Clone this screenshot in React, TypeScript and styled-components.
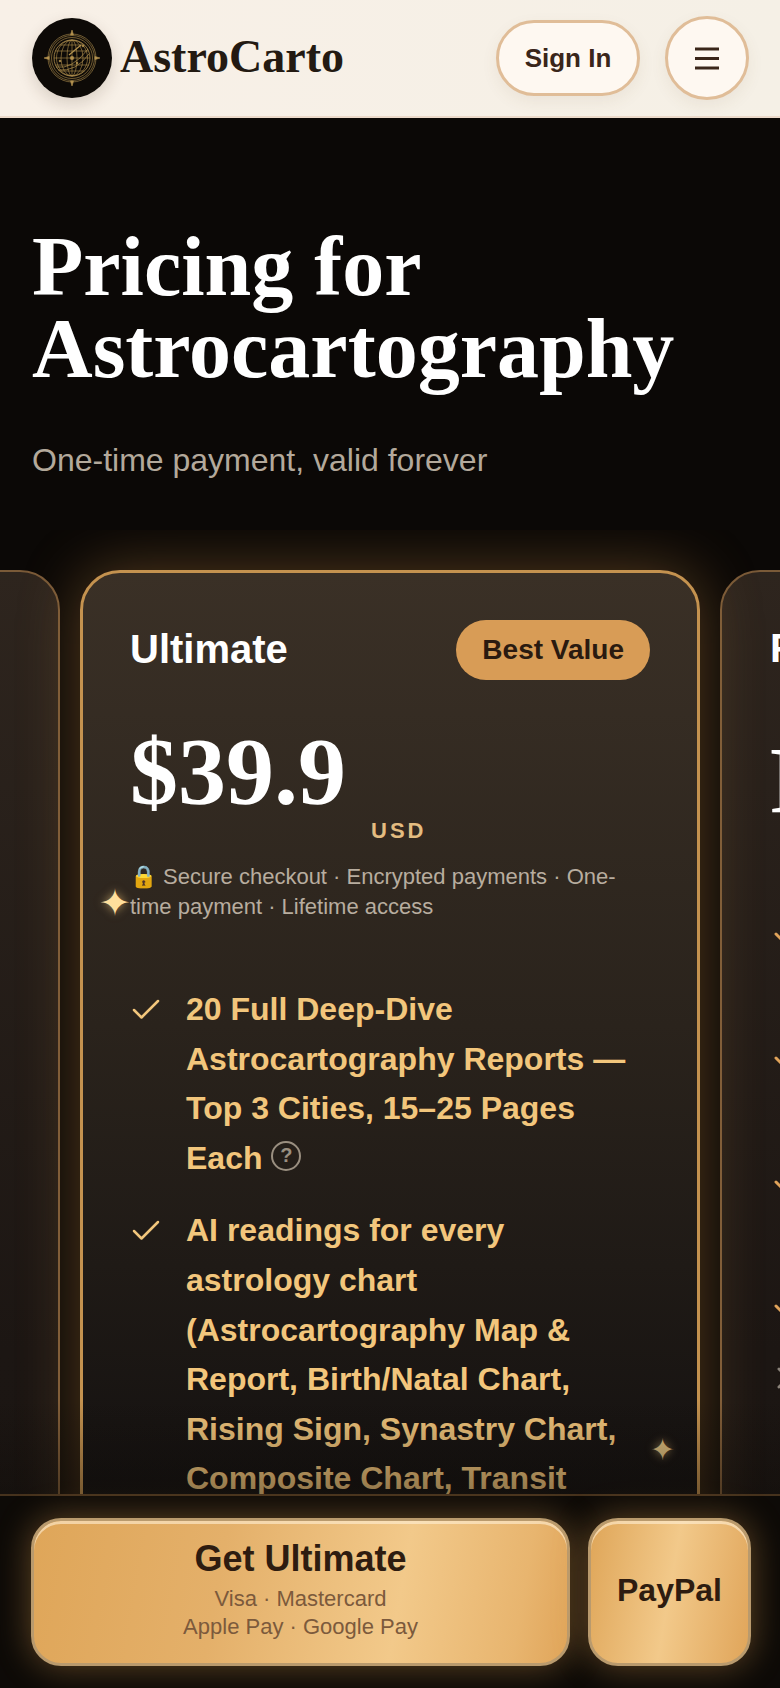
import styled, { createGlobalStyle } from "styled-components";
import { Check, X } from "lucide-react";

const GlobalStyle = createGlobalStyle`
  html, body {
    margin: 0;
    padding: 0;
    background: #0b0806;
  }
  * {
    box-sizing: border-box;
  }
`;

const SANS = `"Liberation Sans", Arial, sans-serif`;
const SERIF = `"Liberation Serif", "Times New Roman", serif`;

const GlobeLogo = () => (
  <svg width="58" height="58" viewBox="-29 -29 58 58" fill="none" stroke="#b3924f" strokeWidth="0.6">
    <circle r="24" />
    <circle r="22.500" />
    <circle r="20.500" />
    <circle r="18" strokeWidth="0.8" />
    <ellipse rx="5" ry="18" />
    <ellipse rx="11" ry="18" />
    <ellipse rx="15.500" ry="18" />
    <path d="M0-18V18M-18 0H18M-16.500-7H16.500M-16.500 7H16.500M-12.500-13H12.500M-12.500 13H12.500" />
    <path d="M-16 9Q0 12 16-9M-14 12Q4 14 17-4" strokeWidth="0.7" />
    <path d="M-3-3L9-13" strokeWidth="1.300" />
    <circle r="1.800" fill="#b3924f" />
    <circle cx="11" cy="-12" r="0.9" fill="#b3924f" />
    <circle cx="-12" cy="3" r="0.9" fill="#b3924f" />
    <circle cx="5" cy="5" r="0.9" fill="#b3924f" />
    <path d="M0-28L1.500-23H-1.500ZM0 28L1.500 23H-1.500ZM-28 0L-23-1.500V1.500ZM28 0L23-1.500V1.500Z" fill="#b3924f" />
  </svg>
);

export default function App() {
  return (
    <Page>
      <GlobalStyle />
      <Header>
        <Brand>
          <LogoBadge>
            <GlobeLogo />
          </LogoBadge>
          <BrandName>AstroCarto</BrandName>
        </Brand>
        <HeaderActions>
          <SignIn>Sign In</SignIn>
          <MenuButton aria-label="Menu">
            <svg width="26" height="24" viewBox="0 0 26 24" stroke="#3a261a" strokeWidth="3">
              <path d="M1 3H25M1 12.500H25M1 22H25" />
            </svg>
          </MenuButton>
        </HeaderActions>
      </Header>

      <Hero>
        <Title>
          Pricing for
          <br />
          Astrocartography
        </Title>
        <Subtitle>One-time payment, valid forever</Subtitle>
      </Hero>

      <Carousel>
        <SideCard />

        <MainCard>
          <Sparkle $left={16} $top={311} $size={38}>✦</Sparkle>
          <Sparkle $left={567} $top={862} $size={30} $dim>✦</Sparkle>
          <CardHead>
            <PlanName>Ultimate</PlanName>
            <Badge>Best Value</Badge>
          </CardHead>
          <PriceRow>
            <Price>$39.9</Price>
            <Currency>USD</Currency>
          </PriceRow>
          <Secure>🔒 Secure checkout · Encrypted payments · One-time payment · Lifetime access</Secure>
          <Features>
            <Feature>
              <CheckMark>
                <Check size={36} strokeWidth={1.7} />
              </CheckMark>
              <FeatureText>
                20 Full Deep-Dive Astrocartography Reports — Top 3 Cities, 15–25 Pages Each{" "}
                <Help>?</Help>
              </FeatureText>
            </Feature>
            <Feature>
              <CheckMark>
                <Check size={36} strokeWidth={1.7} />
              </CheckMark>
              <FeatureText>
                AI readings for every astrology chart (Astrocartography Map &amp; Report,
                Birth/Natal Chart, Rising Sign, Synastry Chart, Composite Chart, Transit
              </FeatureText>
            </Feature>
          </Features>
        </MainCard>

        <SideCard>
          <CardHead>
            <PlanName>Free</PlanName>
          </CardHead>
          <SidePrice>Free</SidePrice>
          <SideList>
            <SideRow><Check size={36} strokeWidth={2} color="#e0a35a" /></SideRow>
            <SideRow><Check size={36} strokeWidth={2} color="#e0a35a" /></SideRow>
            <SideRow><Check size={36} strokeWidth={2} color="#e0a35a" /></SideRow>
            <SideRow $short><Check size={36} strokeWidth={2} color="#e0a35a" /></SideRow>
            <SideRow><X size={36} strokeWidth={2} color="#8a8279" /></SideRow>
          </SideList>
        </SideCard>
      </Carousel>

      <BottomBar>
        <PrimaryButton>
          <ButtonTitle>Get Ultimate</ButtonTitle>
          <ButtonNote>
            Visa · Mastercard
            <br />
            Apple Pay · Google Pay
          </ButtonNote>
        </PrimaryButton>
        <PayPalButton>PayPal</PayPalButton>
      </BottomBar>
    </Page>
  );
}

const Page = styled.div`
  position: relative;
  height: 100vh;
  overflow: hidden;
  display: flex;
  flex-direction: column;
  background: #0b0806;
  font-family: ${SANS};
`;

const Header = styled.header`
  height: 118px;
  flex: none;
  display: flex;
  align-items: center;
  justify-content: space-between;
  padding: 0 31px 0 32px;
  background: linear-gradient(90deg, #f8f0e7, #f5f0e6);
  border-bottom: 2px solid #ecdaca;
`;

const Brand = styled.div`
  display: flex;
  align-items: center;
  gap: 8px;
`;

const LogoBadge = styled.div`
  width: 80px;
  height: 80px;
  border-radius: 50%;
  display: flex;
  align-items: center;
  justify-content: center;
  background: #0d0a07;
  box-shadow: 0 6px 16px rgba(60, 40, 20, 0.16);
`;

const BrandName = styled.div`
  margin-top: -4px;
  font-family: ${SERIF};
  font-weight: 700;
  font-size: 46px;
  color: #231a12;
`;

const HeaderActions = styled.div`
  display: flex;
  align-items: center;
  gap: 25px;
`;

const SignIn = styled.button`
  width: 144px;
  height: 76px;
  border: 3px solid #e0bd98;
  border-radius: 38px;
  background: #fef8f1;
  color: #3a261a;
  font-family: ${SANS};
  font-weight: 700;
  font-size: 26px;
  box-shadow: 0 6px 16px rgba(120, 90, 50, 0.08);
`;

const MenuButton = styled.button`
  width: 84px;
  height: 84px;
  border: 3px solid #e0bd98;
  border-radius: 50%;
  background: #fef8f1;
  display: flex;
  align-items: center;
  justify-content: center;
  padding: 0;
  box-shadow: 0 6px 16px rgba(120, 90, 50, 0.08);
`;

const Hero = styled.section`
  height: 412px;
  flex: none;
  padding: 108px 32px 0;
  background: #0b0806;
`;

const Title = styled.h1`
  margin: 0;
  font-family: ${SERIF};
  font-weight: 700;
  font-size: 84px;
  line-height: 82px;
  color: #fff;
`;

const Subtitle = styled.p`
  margin: 48px 0 0;
  font-size: 32px;
  line-height: 44px;
  color: #b3a99b;
`;

const Carousel = styled.section`
  flex: 1;
  min-height: 0;
  overflow: hidden;
  display: flex;
  justify-content: center;
  gap: 20px;
  padding-top: 40px;
  align-items: flex-start;
`;

const SideCard = styled.div`
  flex: none;
  width: 620px;
  height: 1300px;
  padding: 46px 48px;
  border: 2px solid #7a5a38;
  border-radius: 40px;
  background: linear-gradient(180deg, #2e251e 0%, #1c1613 60%, #1a1512 100%);
`;

const MainCard = styled.div`
  position: relative;
  flex: none;
  width: 620px;
  height: 1300px;
  padding: 46px 47px;
  border: 3px solid #c4924f;
  border-radius: 40px;
  background: linear-gradient(180deg, #3a3026 0%, #2a231c 35%, #141110 72%);
  box-shadow: 0 0 60px rgba(205, 145, 70, 0.38);
`;

const Sparkle = styled.span<{ $left: number; $top: number; $size: number; $dim?: boolean }>`
  position: absolute;
  left: ${(p) => p.$left}px;
  top: ${(p) => p.$top}px;
  font-family: "DejaVu Sans", sans-serif;
  font-size: ${(p) => p.$size}px;
  line-height: 1;
  color: ${(p) => (p.$dim ? "#e0c080" : "#ffdf9c")};
  text-shadow: 0 0 10px rgba(255, 210, 130, 0.6);
`;

const CardHead = styled.div`
  height: 60px;
  display: flex;
  align-items: center;
  justify-content: space-between;
`;

const PlanName = styled.h2`
  margin: 0;
  font-size: 40px;
  font-weight: 700;
  color: #fff;
`;

const Badge = styled.span`
  height: 60px;
  margin-top: 2px;
  padding: 0 26px;
  display: flex;
  align-items: center;
  border-radius: 30px;
  background: #d89c56;
  color: #2a1a10;
  font-size: 28px;
  font-weight: 700;
`;

const PriceRow = styled.div`
  margin-top: 32px;
  display: flex;
  align-items: flex-end;
  gap: 25px;
`;

const Price = styled.div`
  font-family: ${SERIF};
  font-weight: 700;
  font-size: 96px;
  line-height: 122px;
  color: #fff;
`;

const Currency = styled.span`
  margin-bottom: -15px;
  font-size: 22px;
  line-height: 34px;
  font-weight: 700;
  letter-spacing: 3px;
  color: #e3bc80;
`;

const Secure = styled.p`
  margin: 29px 0 0;
  font-size: 22px;
  line-height: 30px;
  color: #b8ad9f;
`;

const Features = styled.ul`
  list-style: none;
  margin: 63px 0 0;
  padding: 0;
  display: flex;
  flex-direction: column;
  gap: 23px;
`;

const Feature = styled.li`
  display: flex;
  gap: 22px;
`;

const CheckMark = styled.span`
  flex: none;
  width: 36px;
  height: 50px;
  margin-left: -2px;
  display: flex;
  align-items: center;
  color: #f2c67c;
`;

const FeatureText = styled.div`
  font-size: 32px;
  line-height: 49.600px;
  font-weight: 700;
  color: #f2c67c;
`;

const Help = styled.span`
  display: inline-flex;
  width: 30px;
  height: 30px;
  align-items: center;
  justify-content: center;
  vertical-align: 7px;
  border: 2.500px solid #9a8f80;
  border-radius: 50%;
  color: #9a8f80;
  font-size: 20px;
`;

const SidePrice = styled.div`
  margin-top: 42px;
  font-family: ${SERIF};
  font-weight: 700;
  font-size: 96px;
  line-height: 122px;
  color: #fff;
`;

const SideList = styled.div`
  margin-top: 74px;
  display: flex;
  flex-direction: column;
`;

const SideRow = styled.div<{ $short?: boolean }>`
  height: ${(p) => (p.$short ? 72 : 124)}px;
  display: flex;
  align-items: flex-start;
`;

const BottomBar = styled.footer`
  position: absolute;
  left: 0;
  right: 0;
  bottom: 0;
  height: 194px;
  display: flex;
  gap: 18px;
  padding: 22px 29px 22px 31px;
  background: #0d0a07;
  border-top: 2px solid #46321d;

  &::before {
    content: "";
    position: absolute;
    left: 0;
    right: 0;
    top: -96px;
    height: 94px;
    background: linear-gradient(180deg, rgba(13, 10, 7, 0), rgba(13, 10, 7, 0.42));
  }
`;

const PrimaryButton = styled.button`
  flex: 1;
  border: 3px solid #b99a6d;
  border-radius: 30px;
  padding: 0 0 10px;
  display: flex;
  flex-direction: column;
  align-items: center;
  justify-content: center;
  font-family: ${SANS};
  background: linear-gradient(100deg, #dfa659 0%, #e4b06a 35%, #f2c98a 68%, #e8b56f 90%, #e0a55a 100%);
  box-shadow: 0 0 34px rgba(225, 160, 80, 0.4), inset 0 3px 0 rgba(255, 240, 215, 0.6);
`;

const ButtonTitle = styled.span`
  font-size: 36px;
  line-height: 52px;
  font-weight: 700;
  color: #2e1c10;
`;

const ButtonNote = styled.span`
  font-size: 22px;
  line-height: 28px;
  color: #7c5a3c;
`;

const PayPalButton = styled.button`
  flex: none;
  width: 163px;
  border: 3px solid #b99a6d;
  border-radius: 30px;
  font-family: ${SANS};
  font-size: 32px;
  font-weight: 700;
  color: #2e1c10;
  background: linear-gradient(100deg, #dfa659 0%, #f2c98a 50%, #e0a55a 100%);
  box-shadow: 0 0 34px rgba(225, 160, 80, 0.4), inset 0 3px 0 rgba(255, 240, 215, 0.6);
  padding: 0 0 3px;
`;
